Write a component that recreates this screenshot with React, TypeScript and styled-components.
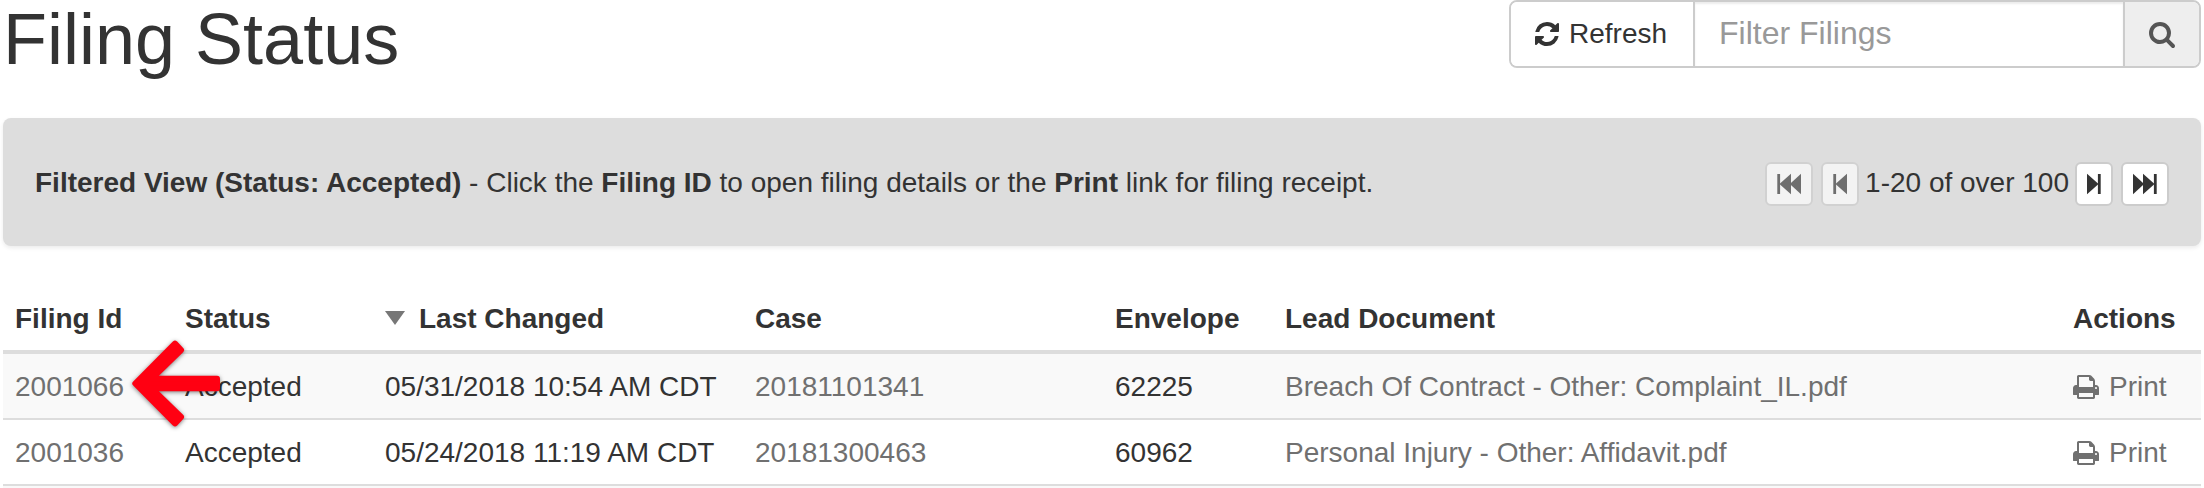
import React from "react";
import styled, { createGlobalStyle } from "styled-components";

const GlobalStyle = createGlobalStyle`
  *, *::before, *::after { box-sizing: border-box; }
  body {
    margin: 0;
    background: #fff;
    color: #333;
    font: 28px/44px "Liberation Sans", Arial, Helvetica, sans-serif;
  }
`;

const Page = styled.main`
  padding: 0 3px;
`;

const Header = styled.header`
  display: flex;
  align-items: flex-start;
  justify-content: space-between;
  margin-bottom: 40px;
`;

const Title = styled.h1`
  margin: 0;
  font-size: 72px;
  font-weight: 400;
  line-height: 78px;
`;

const Toolbar = styled.form`
  display: flex;
  width: 692px;
  height: 68px;
  border: 2px solid #ccc;
  border-radius: 8px;
  overflow: hidden;
`;

const RefreshButton = styled.button`
  display: flex;
  align-items: center;
  gap: 10px;
  padding: 0 26px 0 24px;
  border: 0;
  background: #fff;
  color: #333;
  font: inherit;
`;

const FilterInput = styled.input`
  flex: 1;
  min-width: 0;
  padding: 0 24px 2px;
  border: solid #ccc;
  border-width: 0 2px;
  border-radius: 0;
  background: #fff;
  box-shadow: inset 0 2px 2px rgba(0, 0, 0, 0.075);
  color: #555;
  font: inherit;
  font-size: 32px;
  &::placeholder { color: #999; opacity: 1; }
`;

const SearchButton = styled.button`
  display: flex;
  align-items: center;
  padding: 0 24px;
  border: 0;
  background: #eee;
  color: #555;
`;

const Banner = styled.section`
  display: flex;
  align-items: flex-start;
  justify-content: space-between;
  margin-bottom: 40px;
  padding: 44px 32px 40px;
  border-radius: 8px;
  background: #ddd;
  box-shadow: 0 2px 4px rgba(0, 0, 0, 0.08);
`;

const Message = styled.p`
  margin: 0;
  line-height: 42px;
`;

const Pager = styled.nav`
  display: flex;
  align-items: flex-start;
  gap: 6px;
  line-height: 42px;
`;

const PagerGroup = styled.div`
  display: flex;
  gap: 8px;
`;

const PagerButton = styled.button`
  display: flex;
  align-items: center;
  height: 44px;
  padding: 0 10px;
  border: 2px solid #ccc;
  border-radius: 6px;
  background: #fff;
  color: #333;
  &:disabled { opacity: 0.65; }
`;

const Table = styled.table`
  width: 100%;
  table-layout: fixed;
  border-spacing: 0;
`;

const Column = styled.col<{ $width?: number }>`
  width: ${(p) => (p.$width ? `${p.$width}px` : "auto")};
`;

const HeadCell = styled.th`
  padding: 11px 12px 9px;
  border-bottom: 4px solid #ddd;
  font-weight: 700;
  text-align: left;
  white-space: nowrap;
`;

const Row = styled.tr`
  &:nth-child(odd) { background: #f9f9f9; }
`;

const Cell = styled.td`
  position: relative;
  padding: 11px 12px 9px;
  border-bottom: 2px solid #ddd;
  white-space: nowrap;
`;

const RowEdge = styled.div`
  height: 2px;
  background: #f9f9f9;
`;

const Link = styled.a`
  color: #707070;
  text-decoration: none;
`;

const PrintLink = styled(Link)`
  display: flex;
  align-items: center;
  gap: 10px;
`;

const Sorted = styled.span`
  display: flex;
  align-items: center;
  gap: 14px;
`;

const SortMark = styled.span`
  border: solid transparent;
  border-width: 14px 10px 0;
  border-top-color: #777;
  margin-bottom: 2px;
`;

const Pointer = styled.svg`
  position: absolute;
  z-index: 1;
  top: -24px;
  left: 117px;
  width: 110px;
  height: 110px;
  overflow: visible;
  pointer-events: none;
  filter: drop-shadow(0 1px 2px rgba(0, 0, 0, 0.5));
`;

const glyphs = {
  refresh:
    "M1511 1056q0 5-1 7-64 268-268 434.5t-478 166.5q-146 0-282.5-55t-243.5-157l-129 129q-19 19-45 19t-45-19-19-45v-448q0-26 19-45t45-19h448q26 0 45 19t19 45-19 45l-137 137q71 66 161 102t187 36q134 0 250-65t186-179q11-17 53-117 8-23 30-23h192q13 0 22.5 9.5t9.5 22.5zM1536 256v448q0 26-19 45t-45 19h-448q-26 0-45-19t-19-45 19-45l138-138q-148-137-349-137-134 0-250 65t-186 179q-11 17-53 117-8 23-30 23h-199q-13 0-22.5-9.5t-9.5-22.5v-7q65-268 270-434.5t480-166.5q146 0 284 55.5t245 156.5l130-129q19-19 45-19t45 19 19 45z",
  search:
    "M1152 832q0-185-131.5-316.5t-316.5-131.5-316.5 131.5-131.5 316.5 131.5 316.5 316.5 131.5 316.5-131.5 131.5-316.5zM1664 1664q0 52-38 90t-90 38q-54 0-90-38l-343-342q-179 124-399 124-143 0-273.5-55.5t-225-150-150-225-55.5-273.5 55.5-273.5 150-225 225-150 273.5-55.5 273.5 55.5 225 150 150 225 55.5 273.5q0 220-124 399l343 343q37 37 37 90z",
  print:
    "M384 1536h896v-256h-896v256zM384 896h896v-384h-160q-40 0-68-28t-28-68v-160h-640v640zM1536 960q0-26-19-45t-45-19-45 19-19 45 19 45 45 19 45-19 19-45zM1664 960v416q0 13-9.5 22.5t-22.5 9.5h-224v160q0 40-28 68t-68 28h-960q-40 0-68-28t-28-68v-160h-224q-13 0-22.5-9.5t-9.5-22.5v-416q0-79 56.5-135.5t135.5-56.5h64v-544q0-40 28-68t68-28h672q40 0 88 20t76 48l152 152q28 28 48 76t20 88v256h64q79 0 135.5 56.5t56.5 135.5z",
};

function Glyph({ name, width }: { name: keyof typeof glyphs; width: number }) {
  const unit = width === 24 ? 1536 : 1664;
  return (
    <svg width={width} height={28} viewBox={`0 0 ${unit} 1792`} fill="currentColor" aria-hidden="true">
      <path d={glyphs[name]} />
    </svg>
  );
}

/* A bar with one triangle for a single page, or two for the first or last page. */
function StepIcon({ double, forward }: { double?: boolean; forward?: boolean }) {
  const w = double ? 24 : 14;
  return (
    <svg width={w} height={22} viewBox={`0 0 ${w} 22`} fill="currentColor" aria-hidden="true">
      <g transform={forward ? `translate(${w} 0) scale(-1 1)` : undefined}>
        <path d="M.3 1h2.8v20H.3z" />
        <path d="M14 .7v20.6L3 11.6v-1.2z" />
        {double && <path d="M24 .7v20.6L13.4 11.6v-1.2z" />}
      </g>
    </svg>
  );
}

const filings = [
  {
    id: "2001066",
    status: "Accepted",
    changed: "05/31/2018 10:54 AM CDT",
    caseNo: "20181101341",
    envelope: "62225",
    document: "Breach Of Contract - Other: Complaint_IL.pdf",
    highlighted: true,
  },
  {
    id: "2001036",
    status: "Accepted",
    changed: "05/24/2018 11:19 AM CDT",
    caseNo: "20181300463",
    envelope: "60962",
    document: "Personal Injury - Other: Affidavit.pdf",
    highlighted: false,
  },
];

export default function App() {
  return (
    <Page>
      <GlobalStyle />
      <Header>
        <Title>Filing Status</Title>
        <Toolbar onSubmit={(e) => e.preventDefault()}>
          <RefreshButton type="button">
            <Glyph name="refresh" width={24} />
            Refresh
          </RefreshButton>
          <FilterInput type="text" aria-label="Filter Filings" placeholder="Filter Filings" />
          <SearchButton type="submit" aria-label="Search">
            <Glyph name="search" width={26} />
          </SearchButton>
        </Toolbar>
      </Header>

      <Banner>
        <Message>
          <b>Filtered View (Status: Accepted)</b> - Click the <b>Filing ID</b> to open filing details or the{" "}
          <b>Print</b> link for filing receipt.
        </Message>
        <Pager aria-label="Pages">
          <PagerGroup>
            <PagerButton type="button" disabled aria-label="First page">
              <StepIcon double />
            </PagerButton>
            <PagerButton type="button" disabled aria-label="Previous page">
              <StepIcon />
            </PagerButton>
          </PagerGroup>
          <span>1-20 of over 100</span>
          <PagerGroup>
            <PagerButton type="button" aria-label="Next page">
              <StepIcon forward />
            </PagerButton>
            <PagerButton type="button" aria-label="Last page">
              <StepIcon double forward />
            </PagerButton>
          </PagerGroup>
        </Pager>
      </Banner>

      <Table>
        <colgroup>
          <Column $width={170} />
          <Column $width={200} />
          <Column $width={370} />
          <Column $width={360} />
          <Column $width={170} />
          <Column />
          <Column $width={140} />
        </colgroup>
        <thead>
          <tr>
            <HeadCell scope="col">Filing Id</HeadCell>
            <HeadCell scope="col">Status</HeadCell>
            <HeadCell scope="col" aria-sort="descending">
              <Sorted>
                <SortMark />
                Last Changed
              </Sorted>
            </HeadCell>
            <HeadCell scope="col">Case</HeadCell>
            <HeadCell scope="col">Envelope</HeadCell>
            <HeadCell scope="col">Lead Document</HeadCell>
            <HeadCell scope="col">Actions</HeadCell>
          </tr>
        </thead>
        <tbody>
          {filings.map((f) => (
            <Row key={f.id}>
              <Cell>
                <Link href="#">{f.id}</Link>
                {f.highlighted && (
                  <Pointer viewBox="0 0 330 330" aria-hidden="true">
                    <path
                      d="M46 160.500L165 41L183 60L95 146H291V175H95L183 261L165 280Z"
                      fill="#ff0012"
                      stroke="#ff0012"
                      strokeWidth="18"
                      strokeLinejoin="round"
                    />
                  </Pointer>
                )}
              </Cell>
              <Cell>{f.status}</Cell>
              <Cell>{f.changed}</Cell>
              <Cell>
                <Link href="#">{f.caseNo}</Link>
              </Cell>
              <Cell>{f.envelope}</Cell>
              <Cell>
                <Link href="#">{f.document}</Link>
              </Cell>
              <Cell>
                <PrintLink href="#">
                  <Glyph name="print" width={26} />
                  Print
                </PrintLink>
              </Cell>
            </Row>
          ))}
        </tbody>
      </Table>
      <RowEdge />
    </Page>
  );
}
